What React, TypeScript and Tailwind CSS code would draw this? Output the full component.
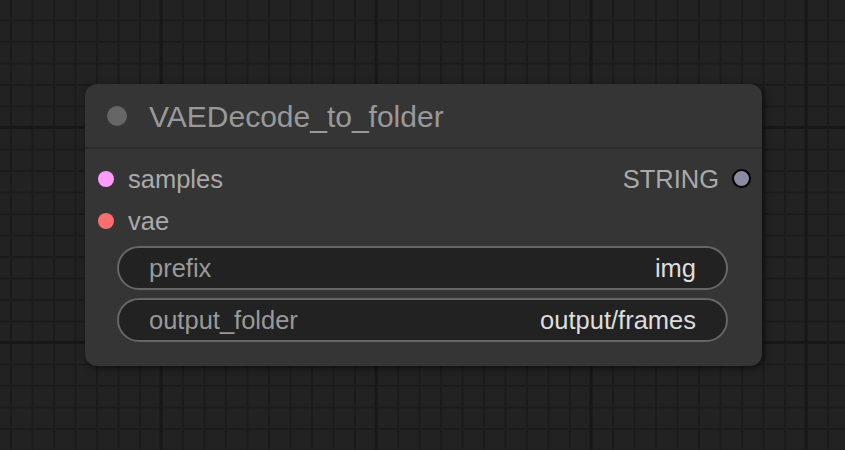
export default function App() {
  return (
    <div
      className="w-[845px] h-[450px] overflow-hidden bg-[#222222] pl-[85px] pt-[84px] font-['Liberation_Sans',Arial,sans-serif]
        [background-image:linear-gradient(to_right,#171717_3px,transparent_3px),linear-gradient(to_bottom,#171717_3px,transparent_3px),linear-gradient(to_right,#1b1b1b_2px,transparent_2px),linear-gradient(to_bottom,#1b1b1b_2px,transparent_2px)]
        [background-size:215px_215px,215px_215px,21.5px_21.5px,21.5px_21.5px]
        [background-position:159.5px_0,0_126px,10px_0,0_19.5px]"
    >
      {/* node */}
      <div className="w-[677px] h-[282px] rounded-[12px] bg-[#353535] shadow-[2px_2px_7px_rgba(0,0,0,0.55)] flex flex-col">
        {/* title */}
        <div className="h-[65px] flex items-center pl-[22px] border-b-2 border-[#2b2b2b] shrink-0">
          <div className="w-[20px] h-[20px] rounded-full bg-[#666666]" />
          <span className="ml-[22px] text-[30px] leading-none text-[#999999] mt-[2px]">VAEDecode_to_folder</span>
        </div>

        {/* slots */}
        <div className="pt-[10px] flex flex-col">
          <div className="h-[42px] flex items-center pl-[13px] pr-[11px]">
            <div className="w-[16px] h-[16px] rounded-full bg-[#ff9cf9] -mt-[3px]" />
            <span className="ml-[14px] text-[25.5px] leading-none text-[#aaaaaa]">samples</span>
            <span className="ml-auto text-[25.5px] leading-none text-[#aaaaaa]">STRING</span>
            <div className="ml-[13px] w-[19px] h-[19px] rounded-full bg-[#8a8aa3] border-2 border-black -mt-[4px]" />
          </div>
          <div className="h-[42px] flex items-center pl-[13px]">
            <div className="w-[16px] h-[16px] rounded-full bg-[#ff6e6e] -mt-[3px]" />
            <span className="ml-[14px] text-[25.5px] leading-none text-[#aaaaaa]">vae</span>
          </div>
        </div>

        {/* widgets */}
        <div className="mt-[3px] ml-[32px] mr-[34px] flex flex-col gap-[8px]">
          <div className="h-[44px] rounded-full bg-[#222222] border-2 border-[#666666] flex items-center pl-[30px] pr-[30px] pt-[1px] text-[25.5px] leading-none">
            <span className="text-[#999999]">prefix</span>
            <span className="ml-auto text-[#dddddd]">img</span>
          </div>
          <div className="h-[44px] rounded-full bg-[#222222] border-2 border-[#666666] flex items-center pl-[30px] pr-[30px] pt-[1px] text-[25.5px] leading-none">
            <span className="text-[#999999]">output_folder</span>
            <span className="ml-auto text-[#dddddd]">output/frames</span>
          </div>
        </div>
      </div>
    </div>
  )
}
